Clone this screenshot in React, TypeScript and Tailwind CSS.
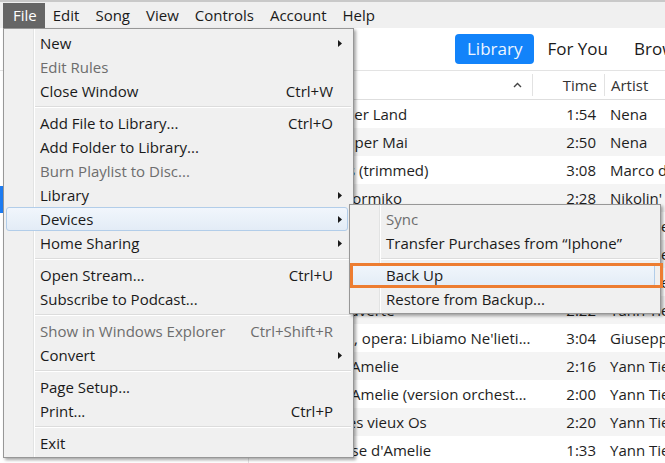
import React from "react";

type MenuEntry =
  | { sep: true }
  | {
      sep?: false;
      label: string;
      shortcut?: string;
      sub?: boolean;
      disabled?: boolean;
      active?: boolean;
    };

const fileMenu: MenuEntry[] = [
  { label: "New", sub: true },
  { label: "Edit Rules", disabled: true },
  { label: "Close Window", shortcut: "Ctrl+W" },
  { sep: true },
  { label: "Add File to Library...", shortcut: "Ctrl+O" },
  { label: "Add Folder to Library..." },
  { label: "Burn Playlist to Disc...", disabled: true },
  { label: "Library", sub: true },
  { label: "Devices", sub: true, active: true },
  { label: "Home Sharing", sub: true },
  { sep: true },
  { label: "Open Stream...", shortcut: "Ctrl+U" },
  { label: "Subscribe to Podcast..." },
  { sep: true },
  { label: "Show in Windows Explorer", shortcut: "Ctrl+Shift+R", disabled: true },
  { label: "Convert", sub: true },
  { sep: true },
  { label: "Page Setup..." },
  { label: "Print...", shortcut: "Ctrl+P" },
  { sep: true },
  { label: "Exit" },
];

const devicesMenu: MenuEntry[] = [
  { label: "Sync", disabled: true },
  { label: "Transfer Purchases from \u201CIphone\u201D" },
  { sep: true },
  { label: "Back Up", active: true },
  { label: "Restore from Backup..." },
];

const menuBar = ["File", "Edit", "Song", "View", "Controls", "Account", "Help"];

const tracks = [
  ["Kein schöner Land", "1:54", "Nena"],
  ["Der alte Super Mai", "2:50", "Nena"],
  ["Tarantellas (trimmed)", "3:08", "Marco da Silva"],
  ["Kanto de Formiko", "2:28", "Nikolin' Hedera"],
  ["La Dispute", "2:47", "Yann Tiersen"],
  ["Le Moulin", "4:25", "Yann Tiersen"],
  ["Pas si simple", "2:33", "Yann Tiersen"],
  ["La Redécouverte", "2:22", "Yann Tiersen"],
  ["La Traviata, opera: Libiamo Ne'lieti...", "3:04", "Giuseppe Verdi"],
  ["La Valse d'Amelie", "2:16", "Yann Tiersen"],
  ["La Valse d'Amelie (version orchest...", "2:00", "Yann Tiersen"],
  ["La Valse des vieux Os", "2:20", "Yann Tiersen"],
  ["L'autre Valse d'Amelie", "1:33", "Yann Tiersen"],
];

const sidebar = ["Recently Added", "Artists", "Albums", "Songs", "Genres", "Music Videos"];

function SubArrow() {
  return (
    <svg width="4" height="7" viewBox="0 0 4 7">
      <path d="M0 0 L4 3.5 L0 7 Z" fill="#1a1a1a" />
    </svg>
  );
}

function MenuRow({ item }: { item: MenuEntry }) {
  if (item.sep) {
    return (
      <div className="h-[8px] flex items-center pl-[29px]">
        <div className="w-full h-[2px] border-t border-[#dcdcdc] border-b border-b-white" />
      </div>
    );
  }
  return (
    <div
      className={`relative z-[1] h-[24px] mr-[3px] flex items-center pl-[33px] rounded-[3px] border ${
        item.active
          ? "border-[#b2cde9] bg-gradient-to-b from-[#f1f6fc] to-[#e3ecf6]"
          : "border-transparent"
      } ${item.disabled ? "text-[#6d6d6d]" : "text-[#1a1a1a]"}`}
    >
      <span className="flex-1 whitespace-nowrap">{item.label}</span>
      {item.shortcut && <span className="whitespace-nowrap">{item.shortcut}</span>}
      <span className="w-[14px] flex items-center pl-[5px]">{item.sub && <SubArrow />}</span>
    </div>
  );
}

function Menu({ items, className, children }: { items: MenuEntry[]; className: string; children?: React.ReactNode }) {
  return (
    <div
      className={`absolute p-[2px] bg-[#f0f0f0] border border-[#979797] shadow-[2px_2px_3px_rgba(0,0,0,0.35)] ${className}`}
    >
      <div className="absolute left-[29px] top-0 bottom-0 w-[2px] border-l border-[#e2e3e3] border-r border-r-white" />
      {items.map((item, i) => (
        <MenuRow key={i} item={item} />
      ))}
      {children}
    </div>
  );
}

export default function App() {
  return (
    <div className="relative w-[665px] h-[463px] overflow-hidden bg-white text-[15px] text-[#1e1e1e] font-['Open_Sans',sans-serif]">
      {/* menu bar */}
      <div className="h-[28px] border-t-2 border-[#c9c9c9] bg-[#f0f0f0] flex pl-[3px] pt-[1px]">
        {menuBar.map((m, i) => (
          <div
            key={m}
            className={`flex items-center whitespace-nowrap ${
              i === 0 ? "bg-[#666666] text-white pl-[10px] pr-[8px]" : "px-[8px] text-[#1a1a1a]"
            }`}
          >
            {m}
          </div>
        ))}
      </div>

      {/* toolbar tabs */}
      <div className="h-[43px] border-b border-[#e3e3e3] flex items-center pl-[455px] gap-[1px] text-[17px] whitespace-nowrap">
        <div className="shrink-0 h-[30px] px-[12px] flex items-center rounded-[4px] bg-[#1283fa] text-[#eef6ff]">Library</div>
        <div className="shrink-0 h-[30px] px-[12px] flex items-center text-[#1a1a1a]">For You</div>
        <div className="shrink-0 h-[30px] px-[13px] flex items-center text-[#1a1a1a]">Browse</div>
      </div>

      <div className="flex">
        {/* sidebar */}
        <div className="shrink-0 w-[249px] h-[400px] border-r border-[#e3e3e3] pt-[8px] text-[13px]">
          <div className="h-[26px] pl-[14px] flex items-center text-[#888]">Library</div>
          {sidebar.map((s) => (
            <div
              key={s}
              className={`h-[27px] pl-[14px] flex items-center ${s === "Songs" ? "bg-[#1e7cf2] text-white" : ""}`}
            >
              {s}
            </div>
          ))}
        </div>

        {/* song list */}
        <div className="flex-1 min-w-0">
          <div className="h-[29px] border-b border-[#dedede] flex text-[#333]">
            <div className="shrink-0 w-[283px] flex items-center justify-end pr-[10px]">
              <svg width="9" height="6" viewBox="0 0 9 6">
                <path d="M1 5 L4.5 1.5 L8 5" stroke="#444" strokeWidth="1.4" fill="none" />
              </svg>
            </div>
            <div className="shrink-0 w-px my-[3px] bg-[#e2e2e2]" />
            <div className="shrink-0 w-[71px] flex items-center justify-end pr-[7px]">Time</div>
            <div className="shrink-0 w-px my-[3px] bg-[#e2e2e2]" />
            <div className="flex-1 flex items-center pl-[6px] whitespace-nowrap">Artist</div>
          </div>
          {tracks.map(([title, time, artist], i) => (
            <div key={i} className={`h-[28px] flex items-center ${i % 2 ? "bg-[#f4f4f4]" : "bg-white"}`}>
              <div className="shrink-0 w-[283px] pl-[29px] whitespace-nowrap overflow-hidden">{title}</div>
              <div className="shrink-0 w-[72px] text-right pr-[8px]">{time}</div>
              <div className="flex-1 pl-[6px] whitespace-nowrap">{artist}</div>
            </div>
          ))}
        </div>
      </div>

      {/* File menu */}
      <Menu items={fileMenu} className="left-[3px] top-[28px] w-[351px] z-10" />

      {/* Devices submenu */}
      <Menu items={devicesMenu} className="left-[349px] top-[204px] w-[312px] z-20">
        <div className="absolute left-0 top-[58px] w-[313px] h-[25px] border-[3px] border-[#ed7d31] z-[2]" />
      </Menu>
    </div>
  );
}
